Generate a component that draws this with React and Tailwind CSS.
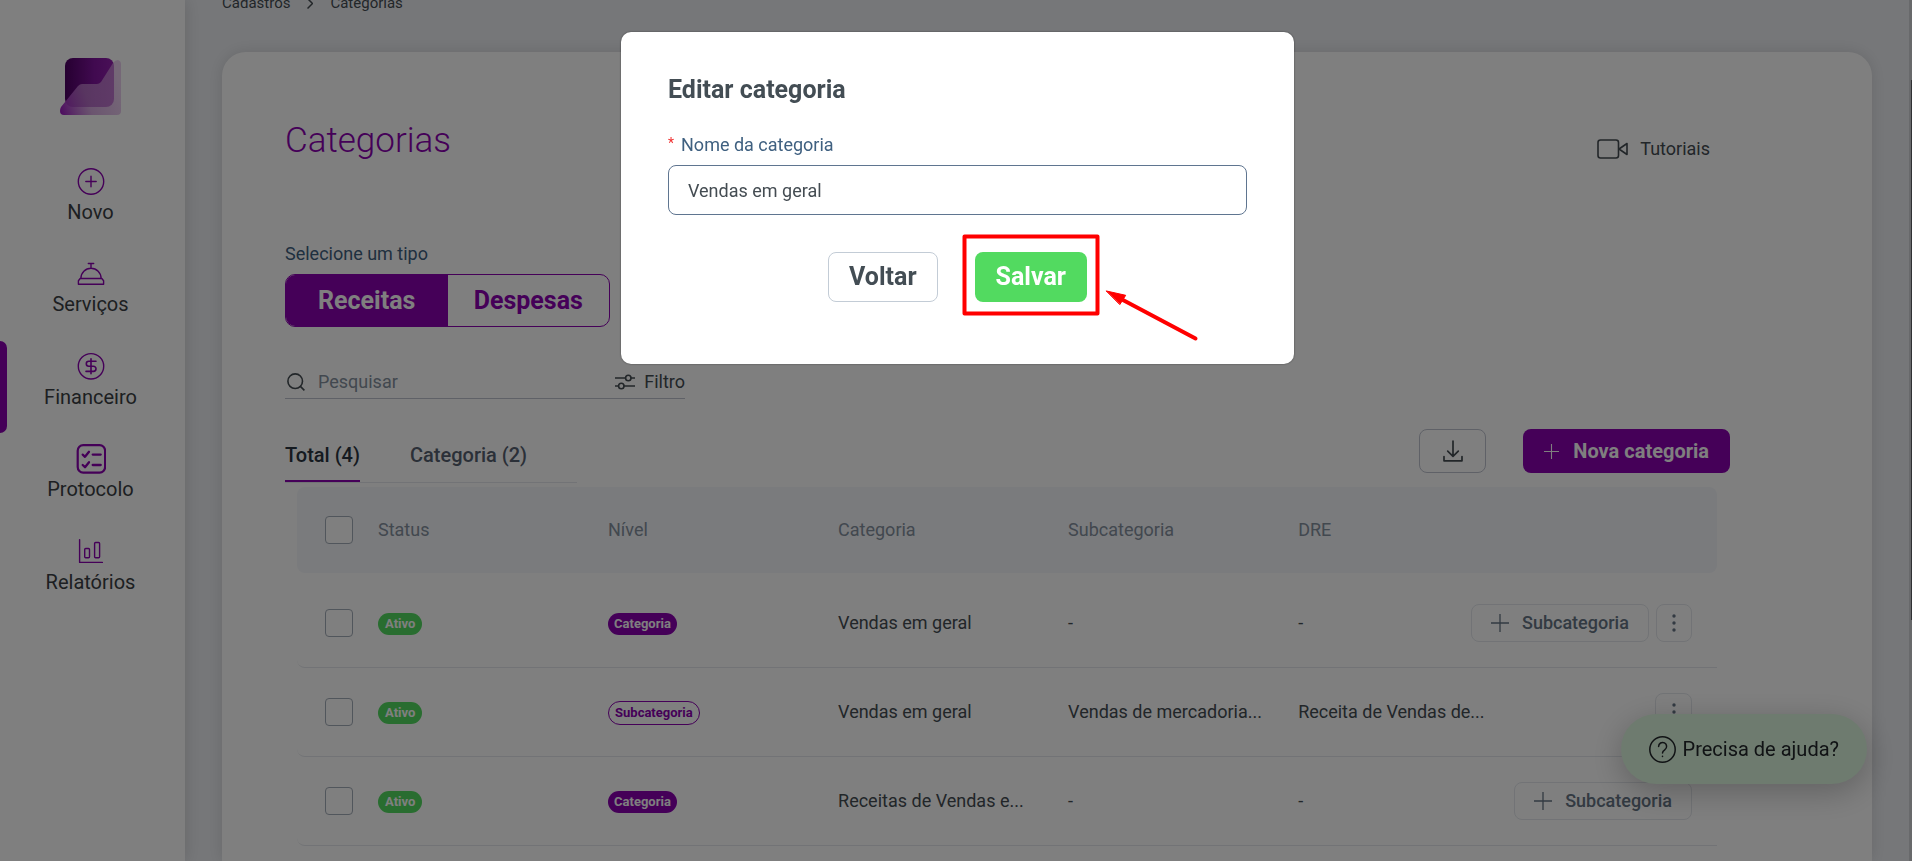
import React, { useState } from 'react';

const Logo = () => (
    <svg width="61" height="57" viewBox="0 0 61 57" fill="none" aria-hidden="true">
        <defs>
            <linearGradient id="logo-back" x1="5" y1="20" x2="54" y2="20" gradientUnits="userSpaceOnUse">
                <stop stopColor="#4c0062" />
                <stop offset="0.6" stopColor="#8214a0" />
                <stop offset="1" stopColor="#9420b0" />
            </linearGradient>
            <linearGradient id="logo-front" x1="0" y1="50" x2="61" y2="30" gradientUnits="userSpaceOnUse">
                <stop stopColor="#9c1fc0" />
                <stop offset="0.45" stopColor="#c88cd4" stopOpacity="0.75" />
                <stop offset="1" stopColor="#dcaee4" stopOpacity="0.6" />
            </linearGradient>
        </defs>
        <rect x="5" y="0" width="49" height="49" rx="8" fill="url(#logo-back)" />
        <path d="M53 5Q55 2 58 2Q61 3 61 6V53Q61 57 57 57H4Q0 57 0 53Q0 51 1 49L18 28Q20 26 22 26H37Q39 26 41 24Z" fill="url(#logo-front)" />
    </svg>
);

const NavIcon = ({ children }) => (
    <svg
        width="30"
        height="30"
        viewBox="0 0 30 30"
        fill="none"
        stroke="#8a00b0"
        strokeWidth="1.4"
        strokeLinecap="round"
        strokeLinejoin="round"
        aria-hidden="true"
    >
        {children}
    </svg>
);

const navItems = [
    {
        label: 'Novo',
        icon: (
            <NavIcon>
                <circle cx="15" cy="14.5" r="12.7" />
                <path d="M15 9.3v10.4M9.8 14.5h10.4" />
            </NavIcon>
        ),
    },
    {
        label: 'Serviços',
        icon: (
            <NavIcon>
                <path d="M12.3 4.5h5.4M15 4.5v4.8M4.9 19.3a10.1 10 0 0 1 20.2 0" />
                <path d="M4.2 19.5h21.6l1.8 2.2v3.5H2.4v-3.5z" />
            </NavIcon>
        ),
    },
    {
        label: 'Financeiro',
        active: true,
        icon: (
            <NavIcon>
                <circle cx="15" cy="14.3" r="12.7" />
                <path strokeWidth="1.6" d="M15 6.8v15M20 9.2h-7.2a2.5 2.5 0 0 0 0 5h4.6a2.6 2.6 0 0 1 0 5.2H10" />
            </NavIcon>
        ),
    },
    {
        label: 'Protocolo',
        icon: (
            <NavIcon>
                <rect x="1.7" y="1.2" width="27.4" height="27.4" rx="5.5" strokeWidth="2.2" />
                <path strokeWidth="2.3" d="M6.7 10.6l2.3 2.2 4-5M6.7 21l2.3 2.2 4-5M16.7 10.6h8M16.7 21h8" />
            </NavIcon>
        ),
    },
    {
        label: 'Relatórios',
        icon: (
            <NavIcon>
                <path d="M3.6 2.6v22.8H26.4" />
                <rect x="8.7" y="11.5" width="4.8" height="9.3" rx="1" />
                <rect x="18.6" y="5.5" width="5" height="15.3" rx="1" />
            </NavIcon>
        ),
    },
];

const rows = [
    { id: 1, nivel: 'Categoria', categoria: 'Vendas em geral', sub: '-', dre: '-', add: true, menu: true },
    {
        id: 2,
        nivel: 'Subcategoria',
        categoria: 'Vendas em geral',
        sub: 'Vendas de mercadoria...',
        dre: 'Receita de Vendas de...',
        menu: true,
    },
    { id: 3, nivel: 'Categoria', categoria: 'Receitas de Vendas e...', sub: '-', dre: '-', add: true },
];

const Plus = ({ size }) => (
    <svg width={size} height={size} viewBox="0 0 18 18" stroke="currentColor" strokeWidth="1.3" aria-hidden="true">
        <path d="M9 0v18M0 9h18" />
    </svg>
);

const Checkbox = ({ label }) => (
    <input
        type="checkbox"
        aria-label={label}
        className="block size-7 appearance-none rounded-sm border border-[#a3acb8] bg-white checked:bg-[#8a00b0]"
    />
);

const Sidebar = () => (
    <aside className="z-10 flex w-[185px] shrink-0 flex-col items-center bg-white pt-[58px] shadow-[0_0_16px_rgba(0,0,0,0.15)]">
        <a href="#inicio" aria-label="Início" className="mr-1">
            <Logo />
        </a>
        <nav className="mt-[41px] grid h-[462px] w-full auto-rows-fr">
            {navItems.map((item) => (
                <a
                    key={item.label}
                    href={`#${item.label}`}
                    className="relative flex flex-col items-center pt-[11px] pr-1 text-xl leading-[30px] text-[#3a3f44]"
                >
                    {item.active && <span className="absolute inset-y-0 left-0 w-[7px] rounded-r-lg bg-[#8a00b0]" />}
                    {item.icon}
                    {item.label}
                </a>
            ))}
        </nav>
    </aside>
);

const CategoryTable = () => (
    <table className="w-full table-fixed border-separate border-spacing-0 text-left text-lg text-[#444c52]">
        <thead className="text-[#84909e]">
            <tr className="h-[86px]">
                <th className="w-[81px] rounded-l-lg bg-[#f4f6fa] pl-7 font-normal">
                    <Checkbox label="Selecionar todas" />
                </th>
                <th className="w-[16.2%] bg-[#f4f6fa] font-normal">Status</th>
                <th className="w-[16.2%] bg-[#f4f6fa] font-normal">Nível</th>
                <th className="w-[16.2%] bg-[#f4f6fa] font-normal">Categoria</th>
                <th className="w-[16.2%] bg-[#f4f6fa] font-normal">Subcategoria</th>
                <th className="bg-[#f4f6fa] font-normal">DRE</th>
                <th className="w-[246px] rounded-r-lg bg-[#f4f6fa]" aria-label="Ações"></th>
            </tr>
        </thead>
        <tbody className="before:block before:h-[6px] before:content-['']">
            {rows.map((row) => (
                <tr key={row.id} className="h-[89px] whitespace-nowrap *:border-b *:border-[#e4e7ec]">
                    <td className="rounded-bl-lg pl-7">
                        <Checkbox label={`Selecionar ${row.categoria}`} />
                    </td>
                    <td>
                        <span className="inline-flex h-[22px] items-center rounded-full bg-[#52da60] px-[7px] align-middle text-[13px] font-bold text-white">
                            Ativo
                        </span>
                    </td>
                    <td>
                        {row.nivel === 'Categoria' ? (
                            <span className="inline-flex h-[22px] items-center rounded-full bg-[#8a00b0] px-[6px] align-middle text-[13px] font-bold text-white">
                                {row.nivel}
                            </span>
                        ) : (
                            <span className="inline-flex h-6 items-center rounded-full border border-[#8a00b0] px-[6px] align-middle text-[13px] font-bold text-[#8a00b0]">
                                {row.nivel}
                            </span>
                        )}
                    </td>
                    <td>{row.categoria}</td>
                    <td>{row.sub}</td>
                    <td>{row.dre}</td>
                    <td className="pr-[25px]">
                        <div className="flex justify-end gap-[7px] text-[#667585]">
                            {row.add && (
                                <button className="flex h-[38px] items-center gap-[13px] rounded-lg border border-[#e4e7ec] px-[19px] font-medium">
                                    <Plus size={18} />
                                    Subcategoria
                                </button>
                            )}
                            {row.menu && (
                                <button
                                    aria-label="Mais opções"
                                    className="flex h-[38px] w-[37px] items-center justify-center rounded-lg border border-[#e4e7ec]"
                                >
                                    <svg width="4" height="18" viewBox="0 0 4 18" fill="currentColor" aria-hidden="true">
                                        <circle cx="2" cy="2" r="1.7" />
                                        <circle cx="2" cy="9" r="1.7" />
                                        <circle cx="2" cy="16" r="1.7" />
                                    </svg>
                                </button>
                            )}
                        </div>
                    </td>
                </tr>
            ))}
        </tbody>
    </table>
);

const EditModal = () => {
    const [name, setName] = useState('Vendas em geral');

    return (
        <div className="fixed inset-0 z-30 flex items-start justify-center bg-black/50 pt-8 pl-[3px]">
            <div
                role="dialog"
                aria-labelledby="modal-title"
                className="w-[673px] rounded-[10px] bg-white px-[47px] pt-[42px] pb-[62px] shadow-[0_0_2px_rgba(0,0,0,0.5)]"
            >
                <h2 id="modal-title" className="text-[25px] leading-8 font-bold text-[#434d54]">
                    Editar categoria
                </h2>
                <label htmlFor="nome" className="mt-[27px] flex gap-[7px] text-lg leading-6 text-[#3f6080]">
                    <span className="text-sm leading-5 text-[#f03030]">*</span>
                    Nome da categoria
                </label>
                <input
                    id="nome"
                    type="text"
                    value={name}
                    onChange={(e) => setName(e.target.value)}
                    className="mt-2 h-[50px] w-full rounded-lg border border-[#5f7590] px-[19px] text-lg text-[#444c52] outline-none"
                />
                <div className="mt-[37px] flex justify-center gap-[37px] text-[25px] font-bold">
                    <button className="h-[50px] rounded-lg border border-[#c3ccd6] px-5 text-[#434d54]">Voltar</button>
                    <div className="relative">
                        <button className="h-[50px] rounded-lg bg-[#52da60] px-[21px] text-white">Salvar</button>
                        <svg
                            className="pointer-events-none absolute -top-[18px] -left-[13px]"
                            width="238"
                            height="108"
                            viewBox="0 0 238 108"
                            fill="none"
                            stroke="#ff0000"
                            strokeWidth="4"
                            strokeLinecap="round"
                            strokeLinejoin="round"
                            aria-hidden="true"
                        >
                            <rect x="2.5" y="2.5" width="133" height="77" />
                            <path d="M160 65.5L233.5 104.5" />
                            <path d="M144.5 57L163.7 61.3L158 70.3Z" fill="#ff0000" strokeWidth="1" />
                        </svg>
                    </div>
                </div>
            </div>
        </div>
    );
};

export default function App() {
    const [search, setSearch] = useState('');

    return (
        <div className="flex h-screen overflow-hidden bg-[#edeff3] font-['Roboto',sans-serif]">
            <Sidebar />

            <main className="flex min-w-0 flex-1 flex-col pr-[37px] pl-[37px]">
                <nav className="-mt-[9px] mb-[37px] flex h-6 shrink-0 items-center gap-[17px] text-[15px] text-[#444c52]">
                    <a href="#cadastros">Cadastros</a>
                    <svg width="6" height="11" viewBox="0 0 6 11" fill="none" stroke="currentColor" strokeWidth="1.5" aria-hidden="true">
                        <path d="M0.5 0.5l5 5-5 5" />
                    </svg>
                    <a href="#categorias">Categorias</a>
                </nav>

                <section className="flex-1 rounded-t-3xl bg-white pt-[65px] pr-[142px] pl-[63px] shadow-[0_0_16px_rgba(0,0,0,0.12)]">
                    <header className="flex items-end justify-between pr-5">
                        <h1 className="text-[35px] leading-[48px] font-light text-[#8a00b0]">Categorias</h1>
                        <a href="#tutoriais" className="flex items-center gap-[12px] text-lg leading-8 text-[#444c52]">
                            <svg width="31" height="20" viewBox="0 0 31 20" fill="none" stroke="currentColor" strokeWidth="1.6" strokeLinejoin="round" aria-hidden="true">
                                <rect x="1" y="1" width="20.5" height="18" rx="2.5" />
                                <path d="M22 10l8-5.5v11z" />
                            </svg>
                            Tutoriais
                        </a>
                    </header>

                    <p className="mt-[75px] text-lg leading-7 text-[#3f6080]">Selecione um tipo</p>
                    <div className="mt-[6px] flex h-[53px] w-[325px] overflow-hidden rounded-[10px] border border-[#8a00b0] text-[25px] font-bold">
                        <button className="flex-1 bg-[#8a00b0] text-white">Receitas</button>
                        <button className="flex-1 text-[#8a00b0]">Despesas</button>
                    </div>

                    <div className="mt-[38px] flex h-[34px] w-[400px] items-center border-b border-[#bfc3cf] text-lg text-[#444c52]">
                        <svg className="ml-[2px] shrink-0" width="18" height="18" viewBox="0 0 18 18" fill="none" stroke="currentColor" strokeWidth="1.6" aria-hidden="true">
                            <circle cx="8.2" cy="8.2" r="7.3" />
                            <path d="M13.4 13.4l4 4" />
                        </svg>
                        <input
                            type="search"
                            aria-label="Pesquisar"
                            placeholder="Pesquisar"
                            value={search}
                            onChange={(e) => setSearch(e.target.value)}
                            className="ml-[13px] min-w-0 flex-1 outline-none placeholder:text-[#84909e]"
                        />
                        <button className="flex items-center gap-[9px]">
                            <svg width="20" height="16" viewBox="0 0 20 16" fill="none" stroke="currentColor" strokeWidth="1.6" aria-hidden="true">
                                <path d="M0 4h10.5M16 4h4M0 12h3.5M9 12h11" />
                                <circle cx="13.3" cy="4" r="2.7" />
                                <circle cx="6.3" cy="12" r="2.7" />
                            </svg>
                            Filtro
                        </button>
                    </div>

                    <div className="mt-[30px] flex h-[54px] items-start">
                        <div role="tablist" className="flex gap-[50px] self-end border-b border-[#e4e7ec] pr-[50px] text-xl leading-7 font-medium">
                            <button role="tab" aria-selected="true" className="border-b-2 border-[#8a00b0] pb-[11px] text-[#2b3440]">
                                Total (4)
                            </button>
                            <button role="tab" aria-selected="false" className="border-b-2 border-transparent pb-[11px] text-[#566170]">
                                Categoria (2)
                            </button>
                        </div>
                        <button aria-label="Baixar" className="ml-auto flex h-11 w-[67px] items-center justify-center rounded-lg border border-[#bfc3cf] text-[#444c52]">
                            <svg width="20" height="22" viewBox="0 0 20 22" fill="none" stroke="currentColor" strokeWidth="1.7" strokeLinecap="round" strokeLinejoin="round" aria-hidden="true">
                                <path d="M10 1v15M4.7 11.2L10 16.3l5.3-5.1M1 16.5v4.3h18v-4.3" />
                            </svg>
                        </button>
                        <button className="ml-[37px] flex h-11 items-center gap-[14px] rounded-lg bg-[#8a00b0] px-[21px] text-xl font-bold text-white">
                            <Plus size={15} />
                            Nova categoria
                        </button>
                    </div>

                    <div className="mt-1 pr-[13px] pl-3">
                        <CategoryTable />
                    </div>
                </section>
            </main>

            <div className="w-[3px] shrink-0 bg-[#d0d2d6] pt-20 pl-[2px]">
                <div className="h-[540px] bg-[#606468]"></div>
            </div>

            <button className="fixed right-[45px] bottom-[77px] z-20 flex h-[70px] items-center gap-[7px] rounded-full bg-[#dcf6de] px-[28px] text-xl text-[#22262a] shadow-[0_8px_32px_rgba(0,0,0,0.24)]">
                <svg width="27" height="27" viewBox="0 0 27 27" fill="none" stroke="currentColor" strokeWidth="1.5" strokeLinecap="round" aria-hidden="true">
                    <circle cx="13.5" cy="13.5" r="12.7" />
                    <path d="M9.6 10.4a4 4 0 1 1 6.3 3.3c-1.6 1.1-2.4 1.6-2.4 3.2M13.5 20.2v.3" />
                </svg>
                Precisa de ajuda?
            </button>

            <EditModal />
        </div>
    );
}
